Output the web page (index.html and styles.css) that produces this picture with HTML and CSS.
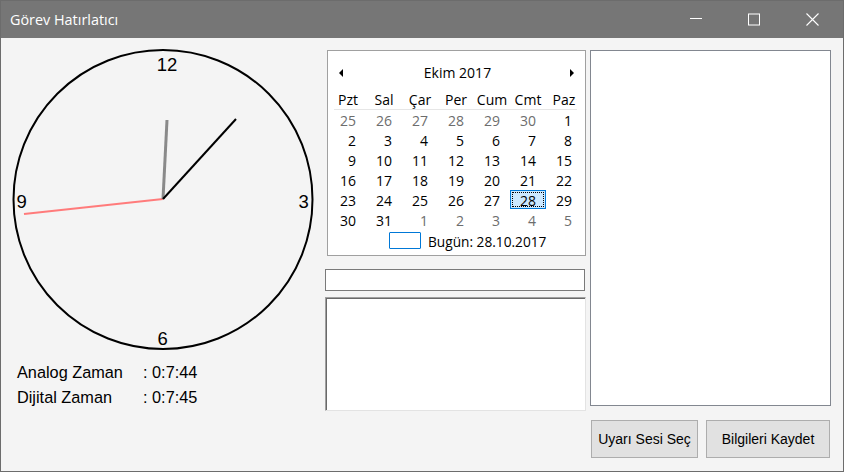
FILE: index.html
```html
<!DOCTYPE html>
<html lang="tr">
<head>
<meta charset="utf-8">
<title>Görev Hatırlatıcı</title>
<link rel="stylesheet" href="styles.css">
</head>
<body>
<div class="window">
  <div class="titlebar">
    <span class="title">Görev Hatırlatıcı</span>
    <div class="controls">
      <span class="ctl"><svg width="46" height="30" viewBox="0 0 46 30"><line x1="17" y1="13.5" x2="29" y2="13.5" stroke="#fff" stroke-width="1"/></svg></span>
      <span class="ctl"><svg width="46" height="30" viewBox="0 0 46 30"><rect x="17.5" y="9" width="11" height="11" fill="none" stroke="#fff" stroke-width="1"/></svg></span>
      <span class="ctl"><svg width="46" height="30" viewBox="0 0 46 30"><path d="M17.5 8.5 L29.5 20.5 M29.5 8.5 L17.5 20.5" stroke="#fff" stroke-width="1.1"/></svg></span>
    </div>
  </div>
  <div class="content">
    <div class="clockcol">
      <svg class="clock" width="320" height="312" viewBox="0 0 320 312">
        <circle cx="162" cy="161.5" r="149.5" fill="none" stroke="#000" stroke-width="2"/>
        <text x="166" y="33" text-anchor="middle" class="num">12</text>
        <text x="297.5" y="170" class="num">3</text>
        <text x="15.5" y="170" class="num">9</text>
        <text x="156.5" y="307" class="num">6</text>
        <line x1="162" y1="161" x2="23" y2="176" stroke="#ff7b7b" stroke-width="2"/>
        <line x1="162" y1="161" x2="166" y2="82" stroke="#8a8a8a" stroke-width="3"/>
        <line x1="162" y1="161" x2="235" y2="81" stroke="#000" stroke-width="2"/>
      </svg>
      <div class="times">
        <span>Analog Zaman</span><span>: 0:7:44</span>
        <span>Dijital Zaman</span><span>: 0:7:45</span>
      </div>
    </div>
    <div class="midcol">
      <div class="calendar">
        <div class="cal-head">
          <svg width="6" height="10" viewBox="0 0 6 10"><polygon points="5,1 1,5 5,9" fill="#000"/></svg>
          <span class="month">Ekim 2017</span>
          <svg width="6" height="10" viewBox="0 0 6 10"><polygon points="1,1 5,5 1,9" fill="#000"/></svg>
        </div>
        <div class="dow">
          <span>Pzt</span><span>Sal</span><span>Çar</span><span>Per</span><span>Cum</span><span>Cmt</span><span>Paz</span>
        </div>
        <div class="sep"></div>
        <div class="days">
          <span class="other">25</span><span class="other">26</span><span class="other">27</span><span class="other">28</span><span class="other">29</span><span class="other">30</span><span>1</span>
          <span>2</span><span>3</span><span>4</span><span>5</span><span>6</span><span>7</span><span>8</span>
          <span>9</span><span>10</span><span>11</span><span>12</span><span>13</span><span>14</span><span>15</span>
          <span>16</span><span>17</span><span>18</span><span>19</span><span>20</span><span>21</span><span>22</span>
          <span>23</span><span>24</span><span>25</span><span>26</span><span>27</span><span class="sel">28</span><span>29</span>
          <span>30</span><span>31</span><span class="other">1</span><span class="other">2</span><span class="other">3</span><span class="other">4</span><span class="other">5</span>
        </div>
        <div class="today">
          <span class="today-box"></span>
          <span class="today-text">Bugün: 28.10.2017</span>
        </div>
      </div>
      <div class="textbox"></div>
      <div class="textarea"></div>
    </div>
    <div class="rightcol">
      <div class="listbox"></div>
      <div class="buttons">
        <button class="btn btn1">Uyarı Sesi Seç</button>
        <button class="btn btn2">Bilgileri Kaydet</button>
      </div>
    </div>
  </div>
</div>
</body>
</html>
```
FILE: styles.css
```css
* { box-sizing: border-box; }
html, body { margin: 0; padding: 0; }
body { width: 844px; height: 472px; overflow: hidden; background: #f4f4f4; }

.window {
  width: 844px;
  height: 472px;
  border: 1px solid #6c6c6c;
  background: #f4f4f4;
  display: flex;
  flex-direction: column;
}

.titlebar {
  height: 37px;
  background: #767676;
  display: flex;
  align-items: center;
  justify-content: space-between;
  flex: none;
}
.title {
  font-family: "Open Sans", "Noto Sans", sans-serif;
  font-size: 14.4px;
  color: #fff;
  padding-left: 9px;
  padding-bottom: 1px;
}
.controls { display: flex; height: 30px; margin-right: 2px; }
.ctl { width: 58px; height: 30px; display: flex; justify-content: center; }
.controls svg { display: block; }

.content {
  display: flex;
  flex: 1;
}

.clockcol { width: 320px; flex: none; }
.clock { display: block; }
.num { font-family: "Liberation Sans", Arial, sans-serif; font-size: 18.5px; fill: #000; }

.times {
  margin-top: 10px;
  display: grid;
  grid-template-columns: 126px auto;
  padding-left: 16px;
  font-family: "Liberation Sans", Arial, sans-serif;
  font-size: 16.3px;
  line-height: 25px;
  color: #000;
}

.midcol {
  width: 261px;
  flex: none;
  margin-left: 4px;
  padding-top: 12px;
  display: flex;
  flex-direction: column;
}

.calendar {
  margin-left: 2px;
  width: 259px;
  height: 206px;
  background: #fff;
  border: 1px solid #a0a0a0;
  padding: 0 3px 0 2px;
  font-family: "Open Sans", "Noto Sans", sans-serif;
  font-size: 14px;
  color: #000;
}
.cal-head {
  height: 39px;
  padding: 4px 7px 0 8px;
  display: flex;
  align-items: center;
  justify-content: space-between;
}
.cal-head svg { display: block; }
.month { padding-left: 2px; }

.dow, .days {
  display: grid;
  grid-template-columns: repeat(7, 36px);
}
.dow { height: 19px; line-height: 19px; }
.dow span { text-align: center; }
.sep { height: 1px; background: #e6e6e6; margin: 0 5px 0 4px; }
.days { grid-auto-rows: 20px; }
.days span { text-align: right; padding: 2px 10px 0 0; line-height: 18px; }
.days .other { color: #6d6d6d; }
.days .sel {
  background: #cce8ff;
  border: 1px solid #0078d7;
  outline: 1px dotted #000;
  outline-offset: -3px;
  padding: 1px 9px 0 0;
  height: 19px;
}

.today {
  margin-top: 2px;
  padding-left: 59px;
  display: flex;
  align-items: flex-start;
  height: 18px;
}
.today-box {
  width: 32px;
  height: 17px;
  border: 1px solid #0078d7;
  border-radius: 1px;
  margin-right: 7px;
}
.today-text { font-size: 13.7px; line-height: 18px; padding-top: 1px; }

.textbox {
  margin-top: 13px;
  width: 260px;
  height: 22px;
  background: #fff;
  border: 1px solid #7a7a7a;
}
.textarea {
  margin-top: 6px;
  width: 261px;
  height: 114px;
  background: #fff;
  border-top: 1px solid #a0a0a0;
  border-left: 1px solid #a0a0a0;
  border-right: 1px solid #e3e3e3;
  border-bottom: 1px solid #e3e3e3;
  box-shadow: inset 1px 1px 0 #696969;
}

.rightcol {
  width: 241px;
  flex: none;
  margin-left: 4px;
  padding-top: 12px;
  display: flex;
  flex-direction: column;
}
.listbox {
  height: 356px;
  background: #fff;
  border: 1px solid #828790;
}
.buttons {
  margin-top: 14px;
  display: flex;
  gap: 8px;
  padding-left: 1px;
}
.btn {
  height: 38px;
  background: #e1e1e1;
  border: 1px solid #adadad;
  font-family: "Liberation Sans", Arial, sans-serif;
  font-size: 14px;
  color: #000;
  padding: 0;
  margin: 0;
}
.btn1 { width: 107px; }
.btn2 { width: 124px; }
```
